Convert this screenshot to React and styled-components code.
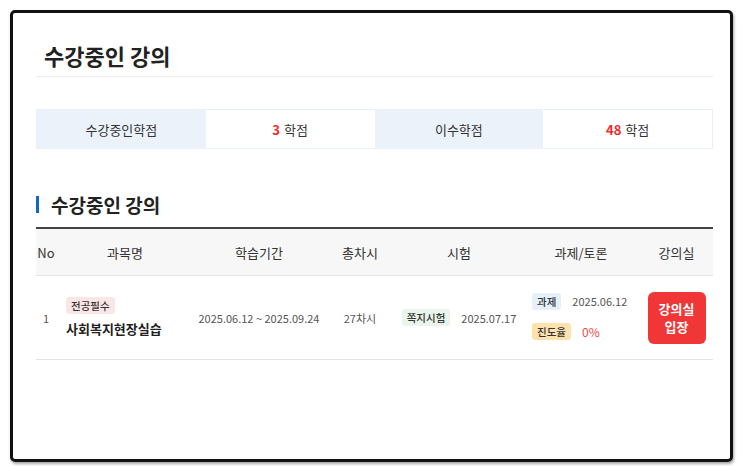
import React from 'react'
import styled, { createGlobalStyle } from 'styled-components';

const GlobalStyle = createGlobalStyle`
    body {
        margin: 0;
        background: #fff;
        font-family: "Noto Sans CJK KR", "Noto Sans", sans-serif;
        color: #333;
    }
`;

const summary = [
    { label: '수강중인학점', value: 3 },
    { label: '이수학점', value: 48 },
];

const columns = [
    { title: 'No', width: 20 },
    { title: '과목명', width: 138 },
    { title: '학습기간', width: 130 },
    { title: '총차시', width: 72 },
    { title: '시험', width: 126 },
    { title: '과제/토론', width: 118 },
    { title: '강의실', width: 73 },
];

function App() {
    return (
        <>
            <GlobalStyle />
            <Frame>
                <PageTitle>수강중인 강의</PageTitle>
                <Summary>
                    {summary.map((s) => (
                        <React.Fragment key={s.label}>
                            <SummaryCell $head>{s.label}</SummaryCell>
                            <SummaryCell>
                                <Credit>{s.value}</Credit> 학점
                            </SummaryCell>
                        </React.Fragment>
                    ))}
                </Summary>

                <SectionTitle>수강중인 강의</SectionTitle>
                <Table>
                    <colgroup>
                        {columns.map((c) => (
                            <col key={c.title} style={{ width: c.width }} />
                        ))}
                    </colgroup>
                    <thead>
                        <tr>
                            {columns.map((c) => (
                                <Th key={c.title}>{c.title}</Th>
                            ))}
                        </tr>
                    </thead>
                    <tbody>
                        <tr>
                            <Td>1</Td>
                            <Td $left>
                                <Badge $tone="pink">전공필수</Badge>
                                <Subject>사회복지현장실습</Subject>
                            </Td>
                            <Td>2025.06.12 ~ 2025.09.24</Td>
                            <Td>27차시</Td>
                            <Td>
                                <Line>
                                    <Badge $tone="green">쪽지시험</Badge>
                                    <span>2025.07.17</span>
                                </Line>
                            </Td>
                            <Td $left>
                                <Stack>
                                    <Line $start>
                                        <Badge $tone="blue">과제</Badge>
                                        <span>2025.06.12</span>
                                    </Line>
                                    <Line $start>
                                        <Badge $tone="orange">진도율</Badge>
                                        <Percent>0%</Percent>
                                    </Line>
                                </Stack>
                            </Td>
                            <Td>
                                <EnterButton>
                                    <span>강의실</span>
                                    <span>입장</span>
                                </EnterButton>
                            </Td>
                        </tr>
                    </tbody>
                </Table>
            </Frame>
        </>
    )
}

const Frame = styled.div`
    box-sizing: border-box;
    margin: 10px;
    width: 723px;
    height: 452px;
    border: 3px solid #111;
    border-radius: 5px;
    box-shadow: 1px 2px 3px rgba(0, 0, 0, 0.35);
    padding: 27px 17px 0 23px;
`;

const PageTitle = styled.h1`
    margin: 0;
    padding: 0 0 6px 8px;
    font-size: 22px;
    line-height: 30px;
    font-weight: 700;
    color: #222;
    border-bottom: 1px solid #ececec;
`;

const Summary = styled.div`
    display: grid;
    grid-template-columns: repeat(4, 1fr);
    margin-top: 32px;
    border: 1px solid #e9f0f8;
`;

const SummaryCell = styled.div`
    height: 38px;
    display: flex;
    align-items: center;
    justify-content: center;
    font-size: 13px;
    color: #333;
    background: ${(p) => (p.$head ? '#ebf2fa' : '#fff')};
`;

const Credit = styled.b`
    color: #f02c2c;
    margin-right: 4px;
`;

const SectionTitle = styled.h2`
    position: relative;
    margin: 42px 0 0;
    padding: 0 0 8px 15px;
    font-size: 19px;
    line-height: 28px;
    font-weight: 700;
    color: #222;

    &::before{
        content: '';
        position: absolute;
        left: 0;
        top: 5px;
        width: 3px;
        height: 17px;
        background: #1266c8;
    }
`;

const Table = styled.table`
    width: 100%;
    border-collapse: collapse;
    table-layout: fixed;
    border-top: 2px solid #444;
`;

const Th = styled.th`
    height: 46px;
    padding: 0;
    background: #f7f7f7;
    border-bottom: 1px solid #e3e3e3;
    font-size: 13px;
    font-weight: 400;
    color: #333;
    text-align: center;
    white-space: nowrap;
`;

const Td = styled.td`
    height: 83px;
    padding: ${(p) => (p.$left ? '0 0 0 10px' : '0')};
    border-bottom: 1px solid #e3e3e3;
    text-align: ${(p) => (p.$left ? 'left' : 'center')};
    font-size: 11px;
    color: #555;
    white-space: nowrap;
    vertical-align: middle;
`;

const badgeTones = {
    pink: '#fbe6e6',
    green: '#e9f4ea',
    blue: '#e6f0fb',
    orange: '#fde2ae',
};

const Badge = styled.span`
    display: inline-block;
    padding: 0 5px;
    height: 17px;
    line-height: 17px;
    border-radius: 3px;
    font-size: 10.5px;
    font-weight: 500;
    color: #333;
    background: ${(p) => badgeTones[p.$tone]};
`;

const Subject = styled.div`
    margin-top: 5px;
    font-size: 13px;
    font-weight: 700;
    color: #222;
`;

const Line = styled.div`
    display: flex;
    align-items: center;
    justify-content: ${(p) => (p.$start ? 'flex-start' : 'center')};
    gap: 11px;
`;

const Stack = styled.div`
    display: flex;
    flex-direction: column;
    gap: 13px;
    margin-top: -3px;
`;

const Percent = styled.span`
    color: #f04848;
    font-size: 12px;
`;

const EnterButton = styled.button`
    width: 58px;
    height: 52px;
    border: none;
    border-radius: 6px;
    background: #f03636;
    color: #fff;
    font-family: inherit;
    font-size: 13px;
    font-weight: 700;
    line-height: 18px;
    cursor: pointer;
    display: inline-flex;
    flex-direction: column;
    align-items: center;
    justify-content: center;
    padding: 0;
`;

export default App;
